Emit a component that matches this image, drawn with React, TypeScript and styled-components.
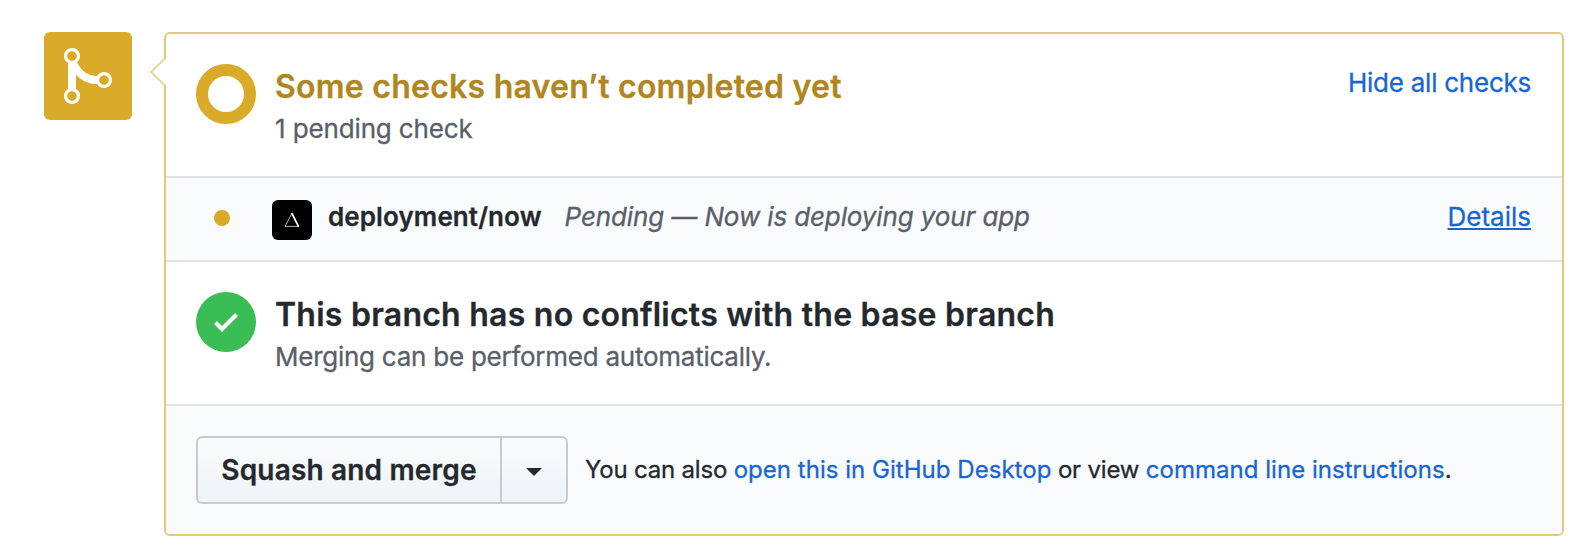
import React from 'react';
import styled, { createGlobalStyle } from 'styled-components';

const Global = createGlobalStyle`
  * { box-sizing: border-box; }
  body {
    margin: 0;
    background: #fff;
    color: #24292e;
    font-family: Inter, "Liberation Sans", sans-serif;
    -webkit-text-stroke: 0.3px currentColor;
  }
`;

const Page = styled.main`
  display: flex;
  align-items: flex-start;
  gap: 32px;
  width: 1584px;
  height: 550px;
  padding: 32px 20px 0 44px;
`;

const Badge = styled.div`
  display: flex;
  flex: none;
  align-items: center;
  justify-content: center;
  width: 88px;
  height: 88px;
  border-radius: 6px;
  background: #d9ab29;
  color: #fff;
`;

const Card = styled.section`
  position: relative;
  width: 1400px;
  height: 504px;
  border: 2px solid #e1cb7c;
  border-radius: 6px;
`;

const Pointer = styled.svg`
  position: absolute;
  left: -16px;
  top: 24px;
`;

const Section = styled.div`
  display: flex;
  align-items: flex-start;
  height: 144px;
  padding: 30px 31px 30px 30px;
  border-bottom: 2px solid #e1e4e8;
`;

const CheckRow = styled.div`
  display: flex;
  align-items: flex-start;
  height: 84px;
  padding: 22px 31px 0 48px;
  border-bottom: 2px solid #e1e4e8;
  background: #fafbfd;
`;

const Footer = styled.div`
  display: flex;
  align-items: flex-start;
  height: 128px;
  padding: 30px;
  border-radius: 0 0 4px 4px;
  background: #fafbfd;
`;

const Ring = styled.div`
  flex: none;
  width: 60px;
  height: 60px;
  border: 12px solid #d9ab29;
  border-radius: 50%;
`;

const Success = styled.div`
  display: flex;
  flex: none;
  align-items: center;
  justify-content: center;
  width: 60px;
  height: 60px;
  border-radius: 50%;
  background: #39bd54;
  color: #fff;
`;

const Summary = styled.div`
  flex: 1;
  padding: 2px 0 0 19px;
`;

const Heading = styled.h1<{ $pending?: boolean }>`
  margin: 0;
  font-size: 32px;
  font-weight: 600;
  line-height: 42px;
  letter-spacing: 0.24px;
  color: ${(p) => (p.$pending ? '#b08620' : '#24292e')};
`;

const Note = styled.p<{ $tracking: number }>`
  margin: 0;
  font-size: 26px;
  line-height: 42px;
  letter-spacing: ${(p) => p.$tracking}px;
  color: #596069;
`;

const Link = styled.a<{ $underline?: boolean }>`
  color: #1766d1;
  text-decoration: ${(p) => (p.$underline ? 'underline' : 'none')};
  text-decoration-thickness: 2px;
  text-underline-offset: 2px;
`;

const Action = styled.div<{ $tracking?: number; $lineHeight: number }>`
  font-size: 26px;
  line-height: ${(p) => p.$lineHeight}px;
  letter-spacing: ${(p) => p.$tracking ?? 0}px;
`;

const Dot = styled.span`
  flex: none;
  width: 16px;
  height: 16px;
  margin-top: 10px;
  border-radius: 50%;
  background: #d9ab29;
`;

const Avatar = styled.span`
  display: flex;
  flex: none;
  align-items: center;
  justify-content: center;
  width: 40px;
  height: 40px;
  margin: 0 16px 0 42px;
  border-radius: 6px;
  background: #000;
`;

const CheckText = styled.div`
  flex: 1;
  font-size: 26px;
  line-height: 34px;
`;

const CheckName = styled.strong`
  font-weight: 600;
  letter-spacing: 0.1px;
`;

const CheckState = styled.em`
  margin-left: 23px;
  letter-spacing: -0.12px;
  color: #596069;
`;

const ButtonGroup = styled.div`
  display: flex;
  flex: none;
  height: 68px;
  border: 2px solid #c9cacd;
  border-radius: 6px;
  background: linear-gradient(#fafbfc, #eff3f6);
`;

const MergeButton = styled.button`
  width: 304px;
  padding: 0;
  border: 0;
  border-right: 2px solid #c9cacd;
  background: none;
  color: #24292e;
  font: 600 28px Inter, "Liberation Sans", sans-serif;
  letter-spacing: 0.18px;
`;

const MenuButton = styled.button`
  display: flex;
  align-items: center;
  justify-content: center;
  width: 64px;
  padding: 4px 0 0;
  border: 0;
  background: none;
`;

const Hint = styled.p`
  margin: 0 0 0 17px;
  font-size: 24px;
  line-height: 68px;
  letter-spacing: -0.2px;
  white-space: nowrap;

  a {
    letter-spacing: 0.03px;
  }
`;

export default function App() {
  return (
    <>
      <Global />
      <Page>
        <Badge>
          <svg width="48" height="64" viewBox="0 0 12 16" fill="currentColor" fillRule="evenodd">
            <path d="M10 7c-.73 0-1.38.41-1.73 1.02V8C7.22 7.98 6 7.64 5.14 6.98c-.75-.58-1.5-1.61-1.89-2.44A1.993 1.993 0 0 0 2 .99C.89.99 0 1.89 0 3a2 2 0 0 0 1 1.72v6.56c-.59.35-1 .99-1 1.72 0 1.11.89 2 2 2a1.993 1.993 0 0 0 1-3.72V7.67c.67.7 1.44 1.27 2.3 1.69.86.42 2.03.63 2.97.64v-.02c.36.61 1 1.02 1.73 1.02 1.11 0 2-.89 2-2 0-1.11-.89-2-2-2zm-6.8 6c0 .66-.55 1.2-1.2 1.2-.65 0-1.2-.55-1.2-1.2 0-.65.55-1.2 1.2-1.2.65 0 1.2.55 1.2 1.2zm0-10c0 .66-.55 1.2-1.2 1.2C1.34 4.2.8 3.65.8 3c0-.65.55-1.2 1.2-1.2.65 0 1.2.55 1.2 1.2zM10 10.2c-.66 0-1.2-.55-1.2-1.2 0-.65.55-1.2 1.2-1.2.65 0 1.2.55 1.2 1.2 0 .65-.55 1.2-1.2 1.2z" />
          </svg>
        </Badge>
        <Card>
          <Pointer width="17" height="28" viewBox="0 0 17 28">
            <path d="M16 0L1 14l15 14h1V0z" fill="#fff" />
            <path d="M15.5 0L1.2 14l14.3 14" fill="none" stroke="#e1cb7c" strokeWidth="1.5" />
          </Pointer>
          <Section>
            <Ring />
            <Summary>
              <Heading $pending>Some checks haven’t completed yet</Heading>
              <Note $tracking={-0.13}>1 pending check</Note>
            </Summary>
            <Action $lineHeight={38} $tracking={-0.25}>
              <Link>Hide all checks</Link>
            </Action>
          </Section>
          <CheckRow>
            <Dot />
            <Avatar>
              <svg width="16" height="16" viewBox="0 0 16 16">
                <path d="M7.8 1.6L1 14.4h14" fill="none" stroke="#b5b5b5" strokeWidth="1" />
                <path d="M7.7 1L14.6 14.6" stroke="#fff" strokeWidth="1.7" />
              </svg>
            </Avatar>
            <CheckText>
              <CheckName>deployment/now</CheckName>
              <CheckState>Pending — Now is deploying your app</CheckState>
            </CheckText>
            <Action $lineHeight={34}>
              <Link $underline>Details</Link>
            </Action>
          </CheckRow>
          <Section>
            <Success>
              <svg width="24" height="32" viewBox="0 0 12 16" fill="currentColor">
                <path d="M12 5l-8 8-4-4 1.5-1.5L4 10l6.5-6.5L12 5z" />
              </svg>
            </Success>
            <Summary>
              <Heading>This branch has no conflicts with the base branch</Heading>
              <Note $tracking={-0.25}>Merging can be performed automatically.</Note>
            </Summary>
          </Section>
          <Footer>
            <ButtonGroup>
              <MergeButton>Squash and merge</MergeButton>
              <MenuButton aria-label="Select merge method">
                <svg width="16" height="8" viewBox="0 0 16 8">
                  <path d="M0 0h16L8 8z" fill="#24292e" />
                </svg>
              </MenuButton>
            </ButtonGroup>
            <Hint>
              You can also <Link>open this in GitHub Desktop</Link> or view <Link>command line instructions</Link>.
            </Hint>
          </Footer>
        </Card>
      </Page>
    </>
  );
}
